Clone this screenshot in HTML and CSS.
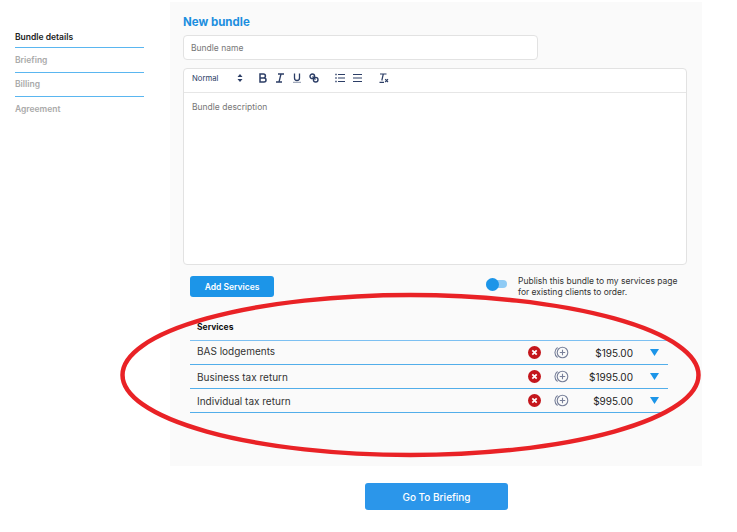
FILE: index.html
```html
<!DOCTYPE html>
<html lang="en">
<head>
<meta charset="utf-8">
<title>New bundle</title>
<link rel="stylesheet" href="styles.css">
</head>
<body>
<div class="page">
  <nav class="steps">
    <div class="step active">Bundle details</div>
    <div class="step tall">Briefing</div>
    <div class="step">Billing</div>
    <div class="step last">Agreement</div>
  </nav>
  <div class="main">
    <section class="panel">
      <h1 class="title">New bundle</h1>
      <div class="input">Bundle name</div>
      <div class="editor">
        <div class="toolbar">
          <span class="select">Normal</span>
          <svg class="sort" width="6" height="8" viewBox="0 0 6 8"><path d="M3 0 5.500 3H.5zM3 8 .5 5h5z" fill="#2c3e66"/></svg>
          <div class="tools first">
            <svg class="tool" width="10" height="10" viewBox="0 0 10 10"><path d="M2 1h3.400a2 2 0 0 1 0 4H2zM2 5h4a2 2 0 0 1 0 4H2z" fill="none" stroke="#2c3e66" stroke-width="1.500"/></svg>
            <svg class="tool" width="10" height="10" viewBox="0 0 10 10"><path d="M3 1h6M1 9h6M6 1 4 9" fill="none" stroke="#2c3e66" stroke-width="1.300"/></svg>
            <svg class="tool" width="10" height="10" viewBox="0 0 10 10"><path d="M2.500 .5v4.500a2.500 2.500 0 0 0 5 0V.5" fill="none" stroke="#2c3e66" stroke-width="1.300"/><path d="M1 9.300h8" stroke="#8b95ab" stroke-width="1"/></svg>
            <svg class="tool" width="10" height="10" viewBox="0 0 10 10"><circle cx="3.300" cy="3.300" r="2.300" fill="none" stroke="#2c3e66" stroke-width="1.400"/><circle cx="6.700" cy="6.700" r="2.300" fill="none" stroke="#2c3e66" stroke-width="1.400"/><path d="M3.500 3.500 6.500 6.500" stroke="#2c3e66" stroke-width="1.400"/></svg>
          </div>
          <div class="tools second">
            <svg class="tool" width="10" height="10" viewBox="0 0 10 10"><path d="M3 1.500h7M3 5h7M3 8.500h7" stroke="#2c3e66" stroke-width="1.200"/><path d="M.3 1.500h1.400M.3 5h1.400M.3 8.500h1.400" stroke="#2c3e66" stroke-width="1.600"/></svg>
            <svg class="tool" width="10" height="10" viewBox="0 0 10 10"><path d="M1 1.500h9M1 5h9M1 8.500h9" stroke="#2c3e66" stroke-width="1.200"/></svg>
          </div>
          <svg class="clear" width="10" height="10" viewBox="0 0 10 10"><path d="M1 1h6.500M4.300 1 2.800 7.500M.5 9.300h4.500" fill="none" stroke="#2c3e66" stroke-width="1.200"/><path d="M6.200 6.200 9 9M9 6.200 6.200 9" stroke="#2c3e66" stroke-width="1.200"/></svg>
        </div>
        <div class="description">Bundle description</div>
      </div>
      <div class="actions">
        <button class="add" type="button">Add Services</button>
        <div class="publish">
          <span class="toggle"><span class="knob"></span></span>
          <p class="publish-text">Publish this bundle to my services page<br>for existing clients to order.</p>
        </div>
      </div>
      <div class="services">
        <div class="services-head">Services</div>
        <div class="row">
          <span class="name raised">BAS lodgements</span>
          <svg class="remove" width="13" height="13" viewBox="0 0 13 13"><circle cx="6.500" cy="6.500" r="6.500" fill="#c4161c"/><path d="M4.300 4.300 8.700 8.700M8.700 4.300 4.300 8.700" stroke="#fff" stroke-width="1.700"/></svg>
          <svg class="extra" width="15" height="13" viewBox="0 0 15 13"><path d="M3.600 1.500a6 6 0 0 0 0 10" fill="none" stroke="#78809a" stroke-width="1.100"/><circle cx="8.500" cy="6.500" r="5.300" fill="none" stroke="#78809a" stroke-width="1.100"/><path d="M8.500 3.800v5.400M5.800 6.500h5.400" stroke="#78809a" stroke-width="1.100"/></svg>
          <span class="price">$195.00</span>
          <svg class="caret" width="9" height="7" viewBox="0 0 9 7"><path d="M0 0h9L4.500 7z" fill="#1c95e8"/></svg>
        </div>
        <div class="row">
          <span class="name">Business tax return</span>
          <svg class="remove" width="13" height="13" viewBox="0 0 13 13"><circle cx="6.500" cy="6.500" r="6.500" fill="#c4161c"/><path d="M4.300 4.300 8.700 8.700M8.700 4.300 4.300 8.700" stroke="#fff" stroke-width="1.700"/></svg>
          <svg class="extra" width="15" height="13" viewBox="0 0 15 13"><path d="M3.600 1.500a6 6 0 0 0 0 10" fill="none" stroke="#78809a" stroke-width="1.100"/><circle cx="8.500" cy="6.500" r="5.300" fill="none" stroke="#78809a" stroke-width="1.100"/><path d="M8.500 3.800v5.400M5.800 6.500h5.400" stroke="#78809a" stroke-width="1.100"/></svg>
          <span class="price">$1995.00</span>
          <svg class="caret" width="9" height="7" viewBox="0 0 9 7"><path d="M0 0h9L4.500 7z" fill="#1c95e8"/></svg>
        </div>
        <div class="row">
          <span class="name">Individual tax return</span>
          <svg class="remove" width="13" height="13" viewBox="0 0 13 13"><circle cx="6.500" cy="6.500" r="6.500" fill="#c4161c"/><path d="M4.300 4.300 8.700 8.700M8.700 4.300 4.300 8.700" stroke="#fff" stroke-width="1.700"/></svg>
          <svg class="extra" width="15" height="13" viewBox="0 0 15 13"><path d="M3.600 1.500a6 6 0 0 0 0 10" fill="none" stroke="#78809a" stroke-width="1.100"/><circle cx="8.500" cy="6.500" r="5.300" fill="none" stroke="#78809a" stroke-width="1.100"/><path d="M8.500 3.800v5.400M5.800 6.500h5.400" stroke="#78809a" stroke-width="1.100"/></svg>
          <span class="price">$995.00</span>
          <svg class="caret" width="9" height="7" viewBox="0 0 9 7"><path d="M0 0h9L4.500 7z" fill="#1c95e8"/></svg>
        </div>
      </div>
    </section>
    <div class="footer"><button class="next" type="button">Go To Briefing</button></div>
  </div>
</div>
<svg class="circle" width="737" height="532" viewBox="0 0 737 532"><ellipse cx="410.500" cy="375" rx="288" ry="80" fill="none" stroke="#e92226" stroke-width="4.500"/></svg>
</body>
</html>
```
FILE: styles.css
```css
* { box-sizing: border-box; }
html, body { margin: 0; height: 100%; background: #fff; }
body { font-family: Inter, "Liberation Sans", sans-serif; color: #222; overflow: hidden; position: relative; }
.page { display: flex; align-items: flex-start; }
.steps { width: 170px; flex: none; padding: 26px 26px 0 15px; }
.step { height: 24px; padding-top: 6px; font-size: 8.500px; line-height: 11px; font-weight: 600; color: #aaa; border-bottom: 1px solid #5ab6f0; }
.step.active { height: 22px; padding-top: 6px; color: #222; }
.step.tall { height: 25px; padding-top: 7px; }
.step.last { border-bottom: 0; padding-top: 6.500px; }
.main { width: 532px; flex: none; }
.panel { height: 464px; margin-top: 2px; background: #fafafa; padding: 13px 15px 0 13px; }
.title { margin: 0 0 6px; font-size: 11.500px; line-height: 14px; font-weight: 700; color: #1c8fdf; }
.input { width: 355px; height: 25px; background: #fff; border: 1px solid #e2e2e2; border-radius: 4px; padding: 0 7px; font-size: 8.500px; line-height: 25px; color: #777; }
.editor { margin-top: 8px; width: 504px; height: 197px; background: #fff; border: 1px solid #e2e2e2; border-radius: 4px; display: flex; flex-direction: column; }
.toolbar { height: 24px; border-bottom: 1px solid #e6e6e6; display: flex; align-items: center; padding: 0 0 5px 8px; flex: none; }
.select { width: 45px; font-size: 7.700px; color: #2c3e66; }
.sort { flex: none; }
.tools { display: flex; gap: 7px; }
.tools.first { margin-left: 15px; }
.tools.second { margin-left: 16px; gap: 7px; }
.clear { margin-left: 17px; }
.description { padding: 9px 8px; font-size: 8.500px; line-height: 11px; color: #777; }
.actions { display: flex; justify-content: space-between; padding: 11px 9px 0 7px; }
.add { width: 84px; height: 21px; border: 0; border-radius: 3px; background: #1c95e8; color: #fff; font: 600 8.500px Inter, sans-serif; padding: 0; }
.publish { display: flex; align-items: flex-start; }
.toggle { width: 21px; height: 8px; margin: 4px 11px 0 0; background: #8fcbf5; border-radius: 4px; position: relative; display: block; }
.knob { position: absolute; left: 0; top: -2.500px; width: 13px; height: 13px; background: #1c95e8; border-radius: 50%; }
.publish-text { margin: 0; font-size: 8.500px; line-height: 10.500px; color: #333; width: 160px; white-space: nowrap; }
.services { margin: 25px 19px 0 7px; }
.services-head { height: 19px; padding: 0 7px; font-size: 8.500px; line-height: 11px; font-weight: 700; color: #111; border-bottom: 1px solid #7cc0f2; }
.row { height: 24px; padding: 0 9px 0 7px; border-bottom: 1px solid #52aeea; display: flex; align-items: center; }
.name { flex: 1; font-size: 10px; color: #333; }
.name.raised { margin-bottom: 4px; }
.remove { flex: none; }
.extra { flex: none; margin-left: 13px; }
.price { width: 64px; text-align: right; font-size: 10px; color: #222; flex: none; }
.caret { flex: none; margin-left: 17px; }
.footer { display: flex; justify-content: flex-start; padding: 17px 0 0 195px; }
.next { width: 143px; height: 27px; border: 0; border-radius: 3px; background: #2b96ea; color: #fff; font: 500 10px Inter, sans-serif; padding: 0; }
.circle { position: absolute; left: 0; top: 0; pointer-events: none; }
```
